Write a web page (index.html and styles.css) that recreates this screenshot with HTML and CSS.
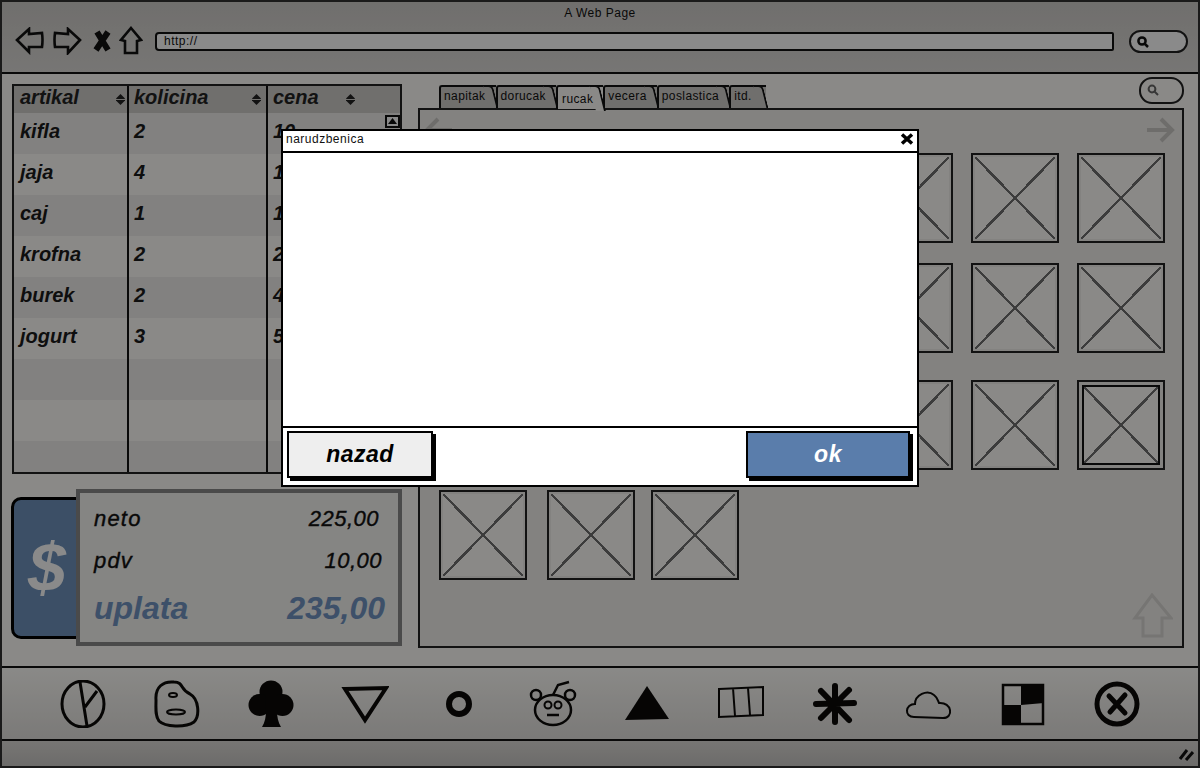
FILE: index.html
```html
<!DOCTYPE html>
<html lang="en">
<head>
    <meta charset="UTF-8">
    <title>A Web Page</title>
    <link rel="stylesheet" href="styles.css">
</head>
<body>
<div class="window">
    <header class="toolbar">
        <div class="page-title">A Web Page</div>
        <div class="nav-row">
            <svg class="nav-icon" width="30" height="28" viewBox="0 0 30 28"><path d="M2 13 L14 2 L14 7 L27 6 Q28 13 27 20 L14 20 L14 25 Z"/></svg>
            <svg class="nav-icon" width="30" height="28" viewBox="0 0 30 28"><path d="M28 13 L16 2 L16 7 L3 6 Q2 13 3 20 L16 20 L16 26 Z"/></svg>
            <svg class="nav-x" width="20" height="24" viewBox="0 0 20 24"><path d="M5 3 L16 21 M16 3 L4 21"/></svg>
            <svg class="nav-home" width="24" height="30" viewBox="0 0 24 30"><path d="M12 2 L22 14 L18 15 L18 27 L6 27 L6 15 L2 14 Z"/></svg>
            <div class="url-bar">http://</div>
            <div class="search-pill dark">
                <svg width="14" height="14" viewBox="0 0 14 14"><circle cx="6" cy="6" r="3.6"/><path d="M8.5 8.5 L12 12"/></svg>
            </div>
        </div>
    </header>

    <main class="content">
        <section class="left-col">
            <div class="order-table">
                <div class="table-col first">
                    <div class="col-head">artikal<span class="sort"></span></div>
                    <div class="cell">kifla</div>
                    <div class="cell">jaja</div>
                    <div class="cell">caj</div>
                    <div class="cell">krofna</div>
                    <div class="cell">burek</div>
                    <div class="cell">jogurt</div>
                    <div class="cell"></div>
                    <div class="cell"></div>
                    <div class="cell"></div>
                </div>
                <div class="table-col second">
                    <div class="col-head">kolicina<span class="sort"></span></div>
                    <div class="cell">2</div>
                    <div class="cell">4</div>
                    <div class="cell">1</div>
                    <div class="cell">2</div>
                    <div class="cell">2</div>
                    <div class="cell">3</div>
                    <div class="cell"></div>
                    <div class="cell"></div>
                    <div class="cell"></div>
                </div>
                <div class="table-col third">
                    <div class="col-head">cena<span class="sort"></span></div>
                    <div class="cell">10</div>
                    <div class="cell">10</div>
                    <div class="cell">10</div>
                    <div class="cell">20</div>
                    <div class="cell">40</div>
                    <div class="cell">50</div>
                    <div class="cell"></div>
                    <div class="cell"></div>
                    <div class="cell"></div>
                    <svg class="scroll-up" width="15" height="13" viewBox="0 0 15 13"><rect x="1" y="1" width="13" height="11"/><path d="M7.5 3 L12 9 L3 9 Z"/></svg>
                </div>
            </div>
            <div class="summary">
                <div class="dollar">$</div>
                <div class="totals">
                    <div class="total-row"><span class="label">neto</span><span class="amount-a">225,00</span></div>
                    <div class="total-row"><span class="label">pdv</span><span class="amount-b">10,00</span></div>
                    <div class="total-row big"><span>uplata</span><span>235,00</span></div>
                </div>
            </div>
        </section>

        <section class="right-col">
            <div class="tab-row">
                <div class="tabs">
                    <div class="tab">napitak</div>
                    <div class="tab">dorucak</div>
                    <div class="tab active">rucak</div>
                    <div class="tab">vecera</div>
                    <div class="tab">poslastica</div>
                    <div class="tab last">itd.</div>
                </div>
                <div class="search-pill">
                    <svg width="14" height="14" viewBox="0 0 14 14"><circle cx="6" cy="6" r="3.4"/><path d="M8.5 8.5 L12 12"/></svg>
                </div>
            </div>
            <div class="panel">
                <div class="panel-nav">
                    <svg class="ghost" width="30" height="26" viewBox="0 0 30 26"><path d="M28 13 L3 13 M14 2 L3 13 L14 24"/></svg>
                    <svg class="ghost" width="30" height="26" viewBox="0 0 30 26"><path d="M2 13 L27 13 M16 2 L27 13 L16 24"/></svg>
                </div>
                <div class="thumbs">
                    <div class="thumb"></div><div class="thumb"></div><div class="thumb"></div><div class="thumb"></div><div class="thumb"></div><div class="thumb"></div><div class="thumb"></div>
                    <div class="thumb"></div><div class="thumb"></div><div class="thumb"></div><div class="thumb"></div><div class="thumb"></div><div class="thumb"></div><div class="thumb"></div>
                    <div class="thumb"></div><div class="thumb"></div><div class="thumb"></div><div class="thumb"></div><div class="thumb"></div><div class="thumb"></div><div class="thumb selected"></div>
                    <div class="thumb"></div><div class="thumb"></div><div class="thumb"></div>
                </div>
                <svg class="up-arrow" width="42" height="46" viewBox="0 0 42 46"><path d="M21 2 L40 25 L31 25 L31 43 L12 43 L12 25 L4 25 Z"/></svg>
            </div>
        </section>
    </main>

    <nav class="dock">
        <svg width="48" height="48" viewBox="0 0 48 48"><ellipse cx="24" cy="24" rx="21" ry="23" fill="none" stroke-width="3"/><path d="M21 2 L28 46 M26 27 L38 11" fill="none" stroke-width="3"/></svg>
        <svg width="48" height="48" viewBox="0 0 48 48"><path d="M3 20 C2 7 10 1 21 2 C31 2 27 10 37 14 C46 19 47 36 41 42 C32 48 12 47 6 41 C2 36 3 28 3 20 Z" fill="none" stroke-width="3"/><ellipse cx="20" cy="15" rx="4" ry="2" fill="none" stroke-width="2"/><ellipse cx="23" cy="32" rx="9" ry="2.5" fill="none" stroke-width="2"/></svg>
        <svg width="48" height="48" viewBox="0 0 48 48"><g class="solid"><circle cx="24" cy="12" r="11.5"/><circle cx="12.5" cy="25" r="11"/><circle cx="35.5" cy="25" r="11"/><path d="M18 16 L30 16 L30 30 C30 37 31 42 34 47 L15 47 C18 42 19 37 19 30 Z"/></g></svg>
        <svg width="48" height="48" viewBox="0 0 48 48"><path d="M4 9 L45 8 L24 40 Z" fill="none" stroke-width="4"/></svg>
        <svg width="48" height="48" viewBox="0 0 48 48"><ellipse cx="24" cy="24" rx="10" ry="10" fill="none" stroke-width="6"/></svg>
        <svg width="48" height="48" viewBox="0 0 48 48"><ellipse cx="24" cy="30" rx="18" ry="15" fill="none" stroke-width="2.5"/><circle cx="7" cy="15" r="5" fill="none" stroke-width="2.5"/><circle cx="41" cy="15" r="5" fill="none" stroke-width="2.5"/><circle cx="19" cy="25" r="3.5" fill="none" stroke-width="2"/><circle cx="29" cy="25" r="3.5" fill="none" stroke-width="2"/><path d="M18 35 L30 35 M24 15 L29 5 L40 2" fill="none" stroke-width="2.5"/></svg>
        <svg width="48" height="48" viewBox="0 0 48 48"><path class="solid" d="M24 6 L46 39 L2 40 Z"/></svg>
        <svg width="48" height="48" viewBox="0 0 48 48"><path d="M2 9 L46 7 L46 35 L2 37 Z M16 8 L18 36 M31 8 L33 35" fill="none" stroke-width="2"/></svg>
        <svg width="48" height="48" viewBox="0 0 48 48"><path d="M24 6 L24 42 M10 11 L38 40 M38 10 L10 38 M5 24 L43 23" fill="none" stroke-width="6" stroke-linecap="round"/></svg>
        <svg width="48" height="48" viewBox="0 0 48 48"><path d="M9 37 C-1 37 0 24 10 24 C10 15 22 9 29 15 C33 18 33 21 34 23 C47 22 49 38 38 38 Z" fill="none" stroke-width="2"/></svg>
        <svg width="48" height="48" viewBox="0 0 48 48"><rect x="4" y="5" width="40" height="39" fill="none" stroke-width="2.5"/><path class="solid" d="M22 4 L45 4 L45 23 L22 25 Z M3 25 L22 25 L22 45 L3 45 Z"/></svg>
        <svg width="48" height="48" viewBox="0 0 48 48"><circle cx="24" cy="24" r="20" fill="none" stroke-width="5"/><path d="M16 16 L32 33 M32 15 L17 32" fill="none" stroke-width="5" stroke-linecap="round"/></svg>
    </nav>

    <footer class="status-bar">
        <svg width="16" height="14" viewBox="0 0 16 14"><path d="M2 12 L9 3 M8 13 L15 5"/></svg>
    </footer>

    <div class="overlay"></div>

    <div class="modal">
        <div class="modal-title">narudzbenica
            <svg class="modal-close" width="14" height="14" viewBox="0 0 14 14"><path d="M2 2.5 L12 11.5 M12 2.5 L2 11.5"/></svg>
        </div>
        <div class="modal-body"></div>
        <div class="modal-foot">
            <button class="btn">nazad</button>
            <button class="btn primary">ok</button>
        </div>
    </div>
</div>
</body>
</html>
```

FILE: styles.css
```css
* {
    box-sizing: border-box;
}
body {
    margin: 0;
    font-family: "Liberation Sans", Arial, sans-serif;
    color: #111;
}
.window {
    position: relative;
    width: 1200px;
    height: 768px;
    display: flex;
    flex-direction: column;
    border: 2px solid #1a1a1a;
    background: #fffefa;
    overflow: hidden;
}
.toolbar {
    flex: none;
    height: 72px;
    border-bottom: 2px solid #111;
    background: linear-gradient(#cfcdca, #dcdad7);
    padding-top: 4px;
}
.page-title {
    text-align: center;
    font-size: 12px;
    letter-spacing: 0.5px;
    height: 18px;
}
.nav-row {
    display: flex;
    align-items: center;
    height: 34px;
    padding-left: 13px;
}
.nav-row svg {
    flex: none;
}
.nav-icon {
    margin-right: 7px;
}
.nav-icon path, .nav-home path {
    fill: none;
    stroke: #111;
    stroke-width: 2.6;
}
.nav-x {
    margin-left: 3px;
    margin-right: 7px;
}
.nav-x path {
    fill: none;
    stroke: #111;
    stroke-width: 6;
}
.url-bar {
    width: 959px;
    height: 19px;
    margin-left: 12px;
    margin-right: 15px;
    padding-left: 7px;
    border: 2px solid #111;
    border-radius: 4px 2px 2px 4px;
    background: #fff;
    font-size: 12px;
    line-height: 15px;
    letter-spacing: 0.5px;
}
.search-pill {
    flex: none;
    width: 45px;
    height: 27px;
    border: 2px solid #222;
    border-radius: 13px;
    padding: 4px 0 0 5px;
}
.search-pill svg {
    display: block;
    fill: none;
    stroke: #666;
    stroke-width: 2;
}
.search-pill.dark {
    width: 59px;
    height: 23px;
    padding: 3px 0 0 5px;
    background: #fff;
    border-radius: 12px;
}
.search-pill.dark svg {
    stroke: #111;
    stroke-width: 2.5;
}

.content {
    flex: none;
    height: 592px;
    display: flex;
    padding: 10px 14px 0 10px;
    gap: 16px;
}
.left-col {
    width: 390px;
    flex: none;
}
.order-table {
    display: flex;
    height: 390px;
    border: 2px solid #222;
}
.table-col {
    position: relative;
    overflow: hidden;
    border-right: 2px solid #111;
}
.table-col.first {
    width: 115px;
}
.table-col.second {
    width: 139px;
}
.table-col.third {
    flex: 1;
    border-right: none;
}
.col-head {
    position: relative;
    height: 27px;
    background: #cfcdca;
    color: #222;
    font: italic bold 20px/23px "Liberation Sans", Arial, sans-serif;
    padding-left: 6px;
}
.second .col-head, .third .col-head {
    padding-left: 5px;
}
.sort {
    position: absolute;
    top: 8px;
    right: 2px;
    width: 9px;
    height: 11px;
    background: linear-gradient(#222 44%, transparent 44%, transparent 56%, #222 56%);
    clip-path: polygon(50% 0, 100% 40%, 100% 60%, 50% 100%, 0 60%, 0 40%);
}
.second .sort {
    right: 5px;
}
.third .sort {
    right: 45px;
}
.cell {
    height: 41px;
    padding: 6px 0 0 6px;
    color: #1a1a1a;
    font: italic bold 20px/24px "Liberation Sans", Arial, sans-serif;
}
.second .cell, .third .cell {
    padding-left: 5px;
}
.cell:nth-child(odd) {
    background: #fffefa;
}
.cell:nth-child(even) {
    background: #f1efec;
}
.scroll-up {
    position: absolute;
    top: 29px;
    right: 0;
}
.scroll-up rect {
    fill: #fff;
    stroke: #111;
    stroke-width: 2;
}
.scroll-up path {
    fill: #111;
}

.summary {
    display: flex;
    height: 157px;
    margin-top: 15px;
    margin-left: -1px;
}
.dollar {
    flex: none;
    width: 69px;
    height: 142px;
    margin-top: 8px;
    margin-right: -4px;
    border: 3px solid #000;
    border-radius: 10px 0 0 10px;
    background: #6f93bd;
    color: #fff;
    font: italic bold 68px/134px "Liberation Sans", Arial, sans-serif;
    text-align: left;
    padding-left: 14px;
}
.totals {
    position: relative;
    flex: 1;
    border: 4px solid #8a8a8a;
    background: #f6f5f2;
    padding: 13px 13px 0 14px;
}
.total-row {
    display: flex;
    justify-content: space-between;
    height: 42px;
    font: italic 22px/26px "Liberation Sans", Arial, sans-serif;
    letter-spacing: 0.5px;
    -webkit-text-stroke: 0.4px #111;
}
.total-row .label {
    letter-spacing: 1.2px;
}
.total-row.big {
    font: italic bold 32px/36px "Liberation Sans", Arial, sans-serif;
    letter-spacing: 0;
    -webkit-text-stroke: 0;
    color: #7194c2;
}
.amount-a {
    margin-right: 6px;
}
.amount-b {
    margin-right: 3px;
}

.right-col {
    width: 766px;
    flex: none;
    margin-top: -7px;
}
.tab-row {
    display: flex;
    justify-content: space-between;
    height: 31px;
    padding-left: 21px;
}
.tabs {
    display: flex;
    align-items: flex-end;
}
.tab {
    position: relative;
    height: 23px;
    padding: 2px 10px 0 3px;
    border-left: 2px solid #111;
    border-top: 2px solid #111;
    border-radius: 3px 0 0 0;
    background: #cfcdca;
    font-size: 12px;
    line-height: 14px;
    letter-spacing: 0.4px;
}
.tab::after {
    content: "";
    position: absolute;
    top: -2px;
    right: -3px;
    width: 8px;
    height: 23px;
    border-top: 2px solid #111;
    border-right: 2px solid #111;
    border-radius: 0 5px 0 0;
    background: #cfcdca;
    transform: skewX(14deg);
    transform-origin: bottom right;
}
.tab.active {
    height: 24px;
    margin-bottom: -1px;
    padding-top: 5px;
    padding-left: 4px;
    z-index: 1;
    background: #fffefa;
}
.tab.active::after {
    height: 24px;
    background: #fffefa;
}
.tab.last {
    margin-right: 14px;
    padding-right: 14px;
}
.panel {
    position: relative;
    height: 540px;
    border: 2px solid #222;
    background: #f2f1ed;
    padding: 0 18px 0 19px;
}
.panel-nav {
    display: flex;
    justify-content: space-between;
    height: 43px;
    padding-top: 7px;
    margin-left: -15px;
    margin-right: -11px;
}
.ghost path, .up-arrow path {
    fill: none;
    stroke: #cbc9c6;
    stroke-width: 4;
}
.up-arrow {
    position: absolute;
    right: 9px;
    bottom: 7px;
}
.up-arrow path {
    stroke: #dad8d5;
    stroke-width: 3;
}
.thumbs {
    display: grid;
    grid-template-columns: 108px 104px 107px 107px 106px 106px 88px;
    grid-template-rows: 110px 117px 110px 90px;
}
.thumb {
    width: 88px;
    height: 90px;
    border: 2px solid #222;
    padding: 2px;
    background-color: #fffefa;
    background-image:
        linear-gradient(to top right, transparent calc(50% - 1.2px), #6f6f6f calc(50% - 1.2px), #6f6f6f calc(50% + 1.2px), transparent calc(50% + 1.2px)),
        linear-gradient(to bottom right, transparent calc(50% - 1.2px), #6f6f6f calc(50% - 1.2px), #6f6f6f calc(50% + 1.2px), transparent calc(50% + 1.2px));
    background-repeat: no-repeat;
    background-origin: content-box;
    background-clip: content-box, content-box, border-box;
}
.thumb.selected {
    outline: 2px solid #111;
    outline-offset: -7px;
    padding: 5px;
}

.dock {
    flex: none;
    height: 75px;
    border-top: 2px solid #111;
    border-bottom: 2px solid #111;
    background: linear-gradient(#fffefa, #e3e1de);
    display: flex;
    justify-content: space-between;
    align-items: center;
    padding: 0 57px;
}
.dock svg {
    stroke: #0c0b09;
    flex: none;
}
.dock .solid {
    fill: #0c0b09;
    stroke: none;
}
.status-bar {
    flex: 1;
    background: linear-gradient(#dcdad7, #c9c7c4);
    display: flex;
    justify-content: flex-end;
    align-items: center;
    padding-right: 4px;
}
.status-bar path {
    fill: none;
    stroke: #111;
    stroke-width: 3;
}

.overlay {
    position: absolute;
    inset: 0;
    z-index: 5;
    background: rgba(0, 0, 0, 0.46);
}
.modal {
    position: absolute;
    left: 279px;
    top: 127px;
    z-index: 6;
    width: 638px;
    height: 358px;
    border: 2px solid #000;
    background: #fff;
    display: flex;
    flex-direction: column;
}
.modal-title {
    position: relative;
    flex: none;
    height: 22px;
    border-bottom: 2px solid #000;
    font-size: 12px;
    line-height: 17px;
    letter-spacing: 0.5px;
    padding-left: 3px;
}
.modal-close {
    position: absolute;
    right: 3px;
    top: 1px;
}
.modal-close path {
    fill: none;
    stroke: #000;
    stroke-width: 3.5;
}
.modal-body {
    flex: none;
    height: 275px;
    border-bottom: 2px solid #000;
}
.modal-foot {
    flex: 1;
    display: flex;
    justify-content: space-between;
    padding: 3px 7px 0 4px;
}
.btn {
    height: 47px;
    width: 146px;
    border: 2px solid #000;
    box-shadow: 3px 3px 0 #000;
    font: italic bold 23px "Liberation Sans", Arial, sans-serif;
    letter-spacing: 0.5px;
    color: #000;
    background: #eee;
}
.btn.primary {
    width: 164px;
    background: #5a7dab;
    color: #fff;
}
```
